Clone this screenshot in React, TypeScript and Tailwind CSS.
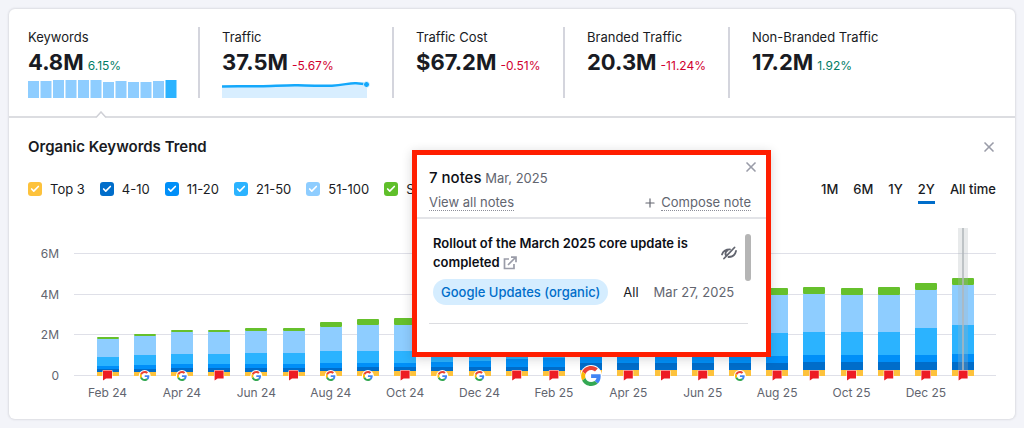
import { useState } from "react";
import { Check, X, Plus } from "lucide-react";
import clsx from "clsx";

const keywordBars = [17, 17, 18, 18, 18, 18, 16, 17, 16, 16, 17, 18];

const legend = [
  { label: "Top 3", color: "bg-[#fdc23c]" },
  { label: "4-10", color: "bg-[#006dca]" },
  { label: "11-20", color: "bg-[#008ff8]" },
  { label: "21-50", color: "bg-[#2bb3ff]" },
  { label: "51-100", color: "bg-[#8ecdff]" },
  { label: "S", color: "bg-[#5fbf2a]" },
];

const periods = ["1M", "6M", "1Y", "2Y", "All time"];

// Stack colours from the tallest boundary down to the baseline
const stackColors = ["#66c02c", "#8ecdff", "#2bb3ff", "#008ff8", "#006dca", "#fdc23c"];

// Stack boundaries above the baseline, one row per month
const months = [
  { label: "Feb 24", marker: "note", stack: [38, 36, 18, 9, 6, 3] },
  { marker: "google", stack: [41, 39, 20, 10, 6, 3] },
  { label: "Apr 24", marker: "google", stack: [45, 43, 21, 11, 7, 3] },
  { marker: "note", stack: [45, 43, 21, 11, 7, 3] },
  { label: "Jun 24", marker: "google", stack: [47, 44, 22, 11, 7, 3] },
  { marker: "note", stack: [47, 44, 22, 11, 7, 3] },
  { label: "Aug 24", marker: "google", stack: [53, 48, 24, 12, 7, 4] },
  { marker: "google", stack: [56, 50, 24, 12, 8, 4] },
  { label: "Oct 24", marker: "note", stack: [57, 50, 24, 12, 8, 4] },
  { marker: "google", stack: [59, 52, 25, 13, 8, 4] },
  { label: "Dec 24", marker: "google", stack: [62, 54, 26, 14, 8, 4] },
  { marker: "note", stack: [64, 56, 28, 16, 8, 4] },
  { label: "Feb 25", marker: "note", stack: [66, 58, 30, 17, 8, 4] },
  { marker: "google", big: true, stack: [70, 62, 34, 19, 12, 5] },
  { label: "Apr 25", marker: "note", stack: [74, 66, 36, 19, 12, 5] },
  { marker: "note", stack: [78, 70, 38, 19, 12, 5] },
  { label: "Jun 25", marker: "note", stack: [82, 74, 40, 19, 12, 5] },
  { marker: "google", stack: [85, 77, 42, 19, 12, 5] },
  { label: "Aug 25", marker: "note", stack: [87, 80, 42, 19, 12, 5] },
  { marker: "note", stack: [88, 81, 43, 20, 13, 5] },
  { label: "Oct 25", marker: "note", stack: [87, 80, 43, 20, 13, 5] },
  { marker: "note", stack: [88, 80, 43, 20, 13, 5] },
  { label: "Dec 25", marker: "note", stack: [92, 85, 47, 20, 13, 5] },
  { marker: "note", stack: [97, 90, 50, 21, 13, 5] },
];

const BASE = 155;

const GoogleMark = ({ x, y, size }: { x: number; y: number; size: number }) => (
  <g>
    <circle cx={x} cy={y} r={size / 2 + 1} fill="#fff" />
    <svg x={x - size / 2} y={y - size / 2} width={size} height={size} viewBox="0 0 48 48">
      <path fill="#ea4335" d="M24 9.5c3.54 0 6.71 1.22 9.21 3.6l6.85-6.85C35.9 2.38 30.47 0 24 0 14.62 0 6.51 5.38 2.56 13.22l7.98 6.19C12.43 13.72 17.74 9.5 24 9.5z" />
      <path fill="#4285f4" d="M46.98 24.55c0-1.57-.15-3.09-.38-4.55H24v9.02h12.94c-.58 2.96-2.26 5.48-4.78 7.18l7.73 6c4.51-4.18 7.09-10.36 7.09-17.65z" />
      <path fill="#fbbc05" d="M10.53 28.59c-.48-1.45-.76-2.99-.76-4.59s.27-3.14.76-4.59l-7.98-6.19C.92 16.46 0 20.12 0 24s.92 7.54 2.56 10.78l7.97-6.19z" />
      <path fill="#34a853" d="M24 48c6.48 0 11.93-2.13 15.89-5.81l-7.73-6c-2.15 1.45-4.92 2.3-8.16 2.3-6.26 0-11.57-4.22-13.47-9.91l-7.98 6.19C6.51 42.62 14.62 48 24 48z" />
    </svg>
  </g>
);

const NoteMark = ({ x, y }: { x: number; y: number }) => (
  <path
    d={`M${x - 4.5} ${y - 4.5}h9v8h-6l-3 2z`}
    fill="#ed1c24"
    stroke="#fff"
    strokeWidth="1"
    paintOrder="stroke"
  />
);

const TrendChart = () => (
  <svg viewBox="0 0 968 185" className="mt-[21px] block w-full" role="img" aria-label="Organic Keywords Trend">
    {["6M", "4M", "2M", "0"].map((tick, i) => {
      const y = [33, 74, 114, 155][i];
      return (
        <g key={tick}>
          <rect x="46" y={y} width="922" height="1" fill="#dfe0e8" />
          <text x="31" y={y + 5} textAnchor="end" fontSize="12" fill="#62656f">
            {tick}
          </text>
        </g>
      );
    })}
    {months.map((month, i) => {
      const cx = 79.5 + i * 37.2;
      const left = Math.round(cx - 11);
      return (
        <g key={i}>
          {month.stack.map((h, s) => (
            <rect
              key={s}
              x={left}
              y={BASE - h}
              width="22"
              height={h - (month.stack[s + 1] ?? -1)}
              rx={s === 0 ? 1 : 0}
              fill={stackColors[s]}
            />
          ))}
          {month.label && (
            <text x={cx} y="177" textAnchor="middle" fontSize="12" fill="#62656f">
              {month.label}
            </text>
          )}
        </g>
      );
    })}
    <rect x="930" y="8" width="10" height="144" fill="#a9b3b5" fillOpacity="0.27" />
    <rect x="934" y="8" width="2" height="144" fill="#b0b5b9" fillOpacity="0.75" />
    {months.map((month, i) => {
      const cx = 79.5 + i * 37.2;
      if (month.marker === "note") return <NoteMark key={i} x={cx} y={155} />;
      return <GoogleMark key={i} x={cx} y={156} size={month.big ? 20 : 10} />;
    })}
  </svg>
);

const metrics = [
  { label: "Keywords", value: "4.8M", change: "6.15%", up: true },
  { label: "Traffic", value: "37.5M", change: "-5.67%", up: false },
  { label: "Traffic Cost", value: "$67.2M", change: "-0.51%", up: false },
  { label: "Branded Traffic", value: "20.3M", change: "-11.24%", up: false },
  { label: "Non-Branded Traffic", value: "17.2M", change: "1.92%", up: true },
];

const NotesPopup = () => (
  <div
    role="dialog"
    aria-label="Notes"
    className="absolute left-[403px] top-[141px] h-[207px] w-[359px] border-[5px] border-[#ff1e00] bg-white shadow-[0_2px_10px_rgba(25,27,35,0.18)]"
  >
    <div className="border-b-2 border-[#e3e4e8] pb-1.5 pl-3 pr-[15px] pt-3">
      <div className="flex items-start justify-between">
        <h3 className="text-[13px] leading-[22px] text-[#62656f]">
          <span className="text-[15px] font-medium text-[#0d0f16]">7 notes</span> Mar, 2025
        </h3>
        <button aria-label="Close notes" className="-mr-2 -mt-2 text-[#9a9ca8]">
          <X className="size-4" strokeWidth={2.5} />
        </button>
      </div>
      <div className="mt-[5px] flex items-start justify-between text-[13px] leading-4 text-[#62656f]">
        <a href="#notes" className="border-b border-dotted border-[#8c8e99]">
          View all notes
        </a>
        <button className="flex items-center gap-1">
          <Plus className="size-3.5" />
          <span className="border-b border-dotted border-[#8c8e99]">Compose note</span>
        </button>
      </div>
    </div>
    <div className="flex items-start pl-4 pr-[15px] pt-[15px]">
      <div className="grow">
        <div className="flex items-center justify-between pr-2">
          <h4 className="w-[264px] text-[13px] font-semibold leading-[19px] text-[#0d0f16]">
            Rollout of the March 2025 core update is completed{" "}
            <a href="#rollout" aria-label="Open note link" className="inline-block align-[-3px] text-[#9a9ca8]">
              <svg viewBox="0 0 14 14" className="size-3.5" fill="none" stroke="currentColor" strokeWidth="1.7">
                <path d="M6 3H1.5v9.500h9.500V8M5 9l7.500-7.500M8 1.200h5v5" />
              </svg>
            </a>
          </h4>
          <button aria-label="Hide note" className="text-[#62656f]">
            <svg viewBox="0 0 16 14" className="h-3.5 w-4" fill="none" stroke="currentColor" strokeWidth="1.8" strokeLinecap="round">
              <path d="M3 12.500 13.500 1.500M1 8.500C2 5 5 3.300 9 3.300M5 9.500C4 7.500 5 5.500 6.500 4.600M15 5c-.8 3.800-3.800 6-7.500 6" />
            </svg>
          </button>
        </div>
        <div className="mt-[7px] flex items-center text-[13px] leading-4 text-[#62656f]">
          <span className="rounded-full bg-[#d5edff] px-2 py-[5px] font-medium text-[#006dca]">
            Google Updates (organic)
          </span>
          <span className="ml-[15px] text-[#191b23]">All</span>
          <span className="ml-[15px]">Mar 27, 2025</span>
        </div>
      </div>
      <div className="h-[47px] w-1.5 shrink-0 rounded-full bg-[#b5b5b5]" />
    </div>
    <hr className="ml-3 mr-[18px] mt-[18px] border-[#dcdde1]" />
  </div>
);

const App = () => {
  const [period, setPeriod] = useState("2Y");

  return (
    <div className="min-h-screen bg-[#f3f4f9] p-[9px] font-['Inter',sans-serif] text-[#191b23]">
      <main className="relative rounded-md bg-white shadow-[0_0_2px_1px_rgba(25,27,35,0.1)]">
        {/* Metrics */}
        <section className="relative grid grid-cols-[170fr_194fr_171fr_165fr_268fr] border-b-2 border-[#dcdde1] px-[19px] pb-[18px] pt-[18px]">
          {metrics.map((metric, index) => (
            <div
              key={metric.label}
              className={clsx("h-[71px] min-w-0", index > 0 && "border-l-2 border-[#d4d5dd] pl-[22px]")}
            >
              <h2 className="whitespace-nowrap text-[13px] leading-5">{metric.label}</h2>
              <p className="flex items-baseline gap-1 leading-[30px]">
                <span className="text-[22px] font-bold">{metric.value}</span>
                <span className={clsx("text-xs", metric.up ? "text-[#007c65]" : "text-[#d1002f]")}>
                  {metric.change}
                </span>
              </p>
              {index === 0 && (
                <svg viewBox="0 0 149 18" className="mt-[3px] h-[18px] w-[149px]">
                  {keywordBars.map((h, i) => (
                    <rect
                      key={i}
                      x={i * 12.5}
                      y={18 - h}
                      width="11"
                      height={h}
                      fill={i === 11 ? "#2bb3ff" : "#8ecdff"}
                    />
                  ))}
                </svg>
              )}
              {index === 1 && (
                <svg viewBox="0 0 149 18" className="mt-[3px] h-[18px] w-[149px]">
                  <path d="M0 6.500 145 4.500V18H0z" fill="#d8eeff" />
                  <path
                    d="M0 6.500C15 6 25 6.500 38 6.300S65 5 76 5.300s22 .9 34 .4 17-2.900 24-2.500l11 1"
                    fill="none"
                    stroke="#14a8fb"
                    strokeWidth="2.500"
                  />
                  <circle cx="144.500" cy="4.500" r="3" fill="#14a8fb" stroke="#fff" strokeWidth="0.800" />
                </svg>
              )}
            </div>
          ))}
          <svg viewBox="0 0 12 7" className="absolute -bottom-0.5 left-[86px] h-[7px] w-3">
            <path d="M1 6 6 1l5 5v1H1z" fill="#fff" />
            <path d="M1 6.500 6 1l5 5.500" fill="none" stroke="#cfd0d6" strokeWidth="1.500" />
          </svg>
        </section>

        {/* Trend */}
        <section className="px-[19px] pb-3.5 pt-[19px]">
          <div className="flex items-center justify-between">
            <h2 className="text-[15px] font-semibold leading-5">Organic Keywords Trend</h2>
            <button aria-label="Close trend" className="-mr-px text-[#9a9ca8]">
              <X className="size-4" strokeWidth={2.5} />
            </button>
          </div>

          <div className="mt-[22px] flex h-5 items-center justify-between text-[13px] leading-5">
            <div className="flex gap-[15px] whitespace-nowrap">
              {legend.map((item) => (
                <label key={item.label} className="flex items-center gap-2">
                  <span className="grid size-3.5 place-items-center">
                    <input
                      type="checkbox"
                      defaultChecked
                      className={clsx("col-start-1 row-start-1 size-3.5 appearance-none rounded-[3px]", item.color)}
                    />
                    <Check className="pointer-events-none col-start-1 row-start-1 size-2.5 text-white" strokeWidth={4} />
                  </span>
                  {item.label}
                </label>
              ))}
            </div>
            <div className="flex gap-[15px] font-medium">
              {periods.map((item) => (
                <button
                  key={item}
                  onClick={() => setPeriod(item)}
                  className={clsx(
                    "border-y-[3px] border-t-transparent py-0.5",
                    period === item ? "border-b-[#006dca]" : "border-b-transparent"
                  )}
                >
                  {item}
                </button>
              ))}
            </div>
          </div>

          <TrendChart />
        </section>

        <NotesPopup />
      </main>
    </div>
  );
};

export default App;
